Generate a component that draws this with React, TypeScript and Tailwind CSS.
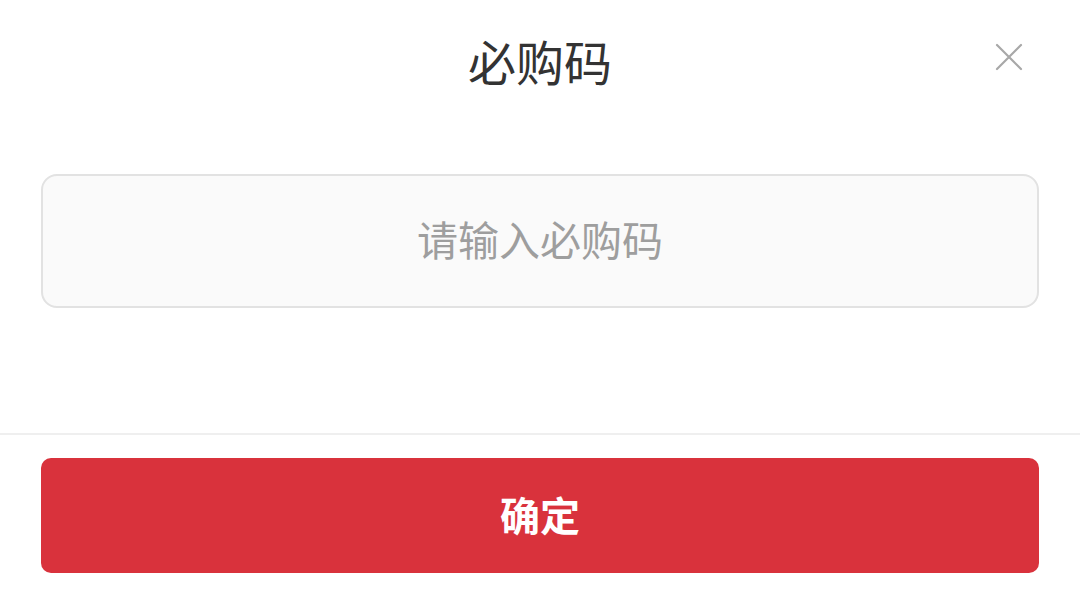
export default function App() {
  return (
    <div
      className="w-[1080px] h-[595px] bg-white overflow-hidden flex flex-col"
      style={{ fontFamily: '"Noto Sans CJK SC", "Noto Sans", sans-serif' }}
    >
      <div className="relative h-[128px] flex items-center justify-center pb-[8px]">
        <h1 className="text-[48px] leading-none font-normal text-[#333333]">必购码</h1>
        <button className="absolute right-[56px] top-[42px] w-[30px] h-[30px] flex items-center justify-center">
          <svg width="28" height="28" viewBox="0 0 28 28" fill="none" stroke="#a8a8a8" strokeWidth="2.2" strokeLinecap="round">
            <path d="M2 2 L26 26 M26 2 L2 26" />
          </svg>
        </button>
      </div>
      <div className="px-[41px] pt-[46px]">
        <div className="h-[134px] rounded-[16px] border-2 border-[#e2e2e2] bg-[#fafafa] flex items-center justify-center pb-[6px]">
          <span className="text-[41px] leading-none text-[#9e9e9e]">请输入必购码</span>
        </div>
      </div>
      <div className="mt-[125px] h-[2px] bg-[#efefef]" />
      <div className="px-[41px] pt-[23px]">
        <button className="w-full h-[115px] rounded-[10px] bg-[#d9323c] flex items-center justify-center pb-[4px]">
          <span className="text-[40px] leading-none font-bold text-white">确定</span>
        </button>
      </div>
    </div>
  );
}
